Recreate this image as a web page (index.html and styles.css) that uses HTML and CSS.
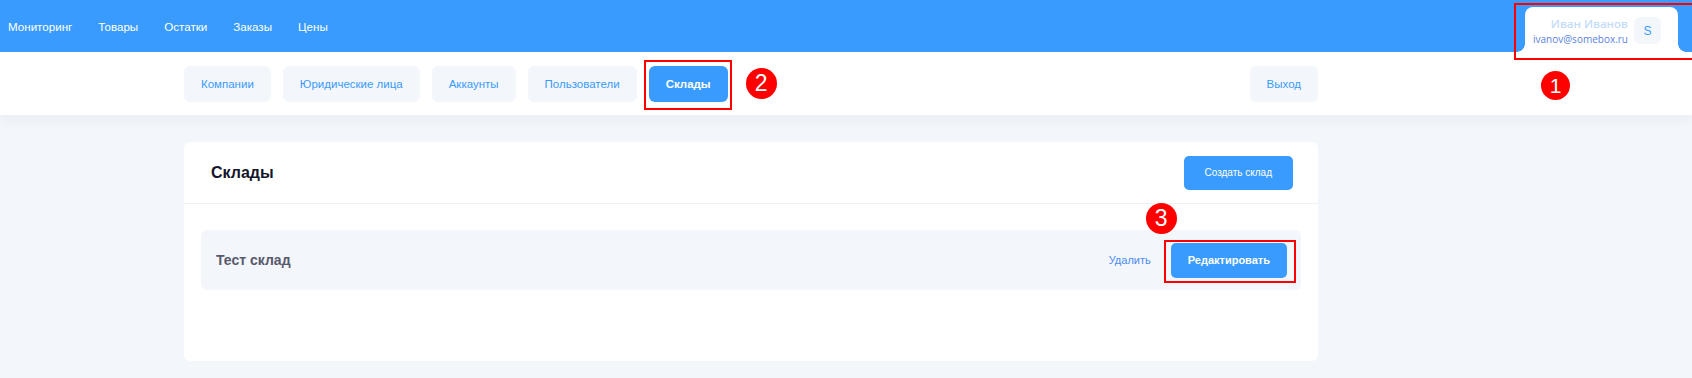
FILE: index.html
```html
<!DOCTYPE html>
<html lang="ru">
<head>
  <meta charset="UTF-8">
  <title>Склады</title>
  <link rel="stylesheet" href="styles.css">
</head>
<body>
  <div class="header">
    <ul class="menu">
      <li><a href="#">Мониторинг</a></li>
      <li><a href="#">Товары</a></li>
      <li><a href="#">Остатки</a></li>
      <li><a href="#">Заказы</a></li>
      <li><a href="#">Цены</a></li>
    </ul>
    <div class="user">
      <div class="user-info">
        <span class="user-name">Иван Иванов</span>
        <span class="user-mail">ivanov@somebox.ru</span>
      </div>
      <span class="avatar">S</span>
      <span class="mark mark-box mark-user"></span>
      <span class="mark mark-num mark-1">1</span>
    </div>
  </div>

  <div class="subheader">
    <div class="wrap tabs">
      <a class="tab" href="#">Компании</a>
      <a class="tab" href="#">Юридические лица</a>
      <a class="tab" href="#">Аккаунты</a>
      <a class="tab" href="#">Пользователи</a>
      <a class="tab active" href="#">Склады
        <span class="mark mark-box mark-tab"></span>
        <span class="mark mark-num mark-2">2</span>
      </a>
      <a class="tab logout" href="#">Выход</a>
    </div>
  </div>

  <div class="wrap">
    <div class="card">
      <div class="card-head">
        <h2>Склады</h2>
        <a class="btn" href="#">Создать склад</a>
      </div>
      <div class="card-body">
        <div class="row">
          <span class="row-name">Тест склад</span>
          <a class="link" href="#">Удалить</a>
          <a class="btn btn-edit" href="#">Редактировать
            <span class="mark mark-box mark-edit"></span>
            <span class="mark mark-num mark-3">3</span>
          </a>
        </div>
      </div>
    </div>
  </div>
</body>
</html>
```

FILE: styles.css
```css
*{
  margin: 0;
  padding: 0;
  box-sizing: border-box;
}
body{
  background: #f3f6fa;
  font-family: "Liberation Sans", Arial, sans-serif;
  overflow: hidden;
}
a{
  text-decoration: none;
}
ul{
  list-style: none;
}

/* header */
.header{
  position: relative;
  z-index: 2;
  height: 52px;
  background: #3a9bfe;
  display: flex;
  align-items: flex-end;
}
.menu{
  display: flex;
  gap: 26px;
  padding-left: 8px;
  height: 52px;
  align-items: center;
}
.menu a{
  color: #fff;
  font-size: 11.6px;
}
.user{
  position: relative;
  margin-left: auto;
  margin-right: 14px;
  width: 153px;
  height: 45px;
  background: #fff;
  border-radius: 8px 8px 0 0;
  display: flex;
  align-items: center;
  justify-content: flex-end;
  gap: 6px;
  padding: 2px 17px 0 0;
}
.user::before,
.user::after{
  content: "";
  position: absolute;
  bottom: 0;
  width: 8px;
  height: 8px;
}
.user::before{
  left: -8px;
  background: radial-gradient(circle at 0 0, transparent 7.5px, #fff 8px);
}
.user::after{
  right: -8px;
  background: radial-gradient(circle at 100% 0, transparent 7.5px, #fff 8px);
}
.user-info{
  display: flex;
  flex-direction: column;
  align-items: flex-end;
  gap: 1px;
  font-family: "Open Sans", sans-serif;
}
.user-name{
  color: #c4dcfb;
  font-size: 11.5px;
  font-weight: 600;
}
.user-mail{
  color: #5a7fe0;
  font-size: 10px;
}
.avatar{
  width: 27px;
  height: 27px;
  border-radius: 6px;
  background: #f3f6fa;
  color: #3a9bfe;
  font-size: 12px;
  display: flex;
  align-items: center;
  justify-content: center;
}

/* subheader */
.subheader{
  position: relative;
  z-index: 1;
  height: 63px;
  background: #fff;
  box-shadow: 0 4px 14px rgba(40, 50, 90, 0.05);
}
.wrap{
  width: 1134px;
  margin-left: 184px;
}
.tabs{
  display: flex;
  gap: 12px;
  padding-top: 14px;
}
.tab{
  position: relative;
  height: 36px;
  padding: 0 17px;
  border-radius: 6px;
  background: #f3f6fa;
  color: #3a9bfe;
  font-size: 11.5px;
  display: flex;
  align-items: center;
}
.tab.active{
  background: #3a9bfe;
  color: #fff;
  font-weight: bold;
}
.logout{
  margin-left: auto;
}

/* card */
.card{
  margin-top: 27px;
  background: #fff;
  border-radius: 6px;
  height: 219px;
}
.card-head{
  height: 62px;
  border-bottom: 1px solid #eef0f4;
  display: flex;
  align-items: center;
  justify-content: space-between;
  padding: 0 25px 0 27px;
}
.card-head h2{
  font-size: 16px;
  font-weight: 600;
  color: #14162b;
}
.btn{
  position: relative;
  height: 34px;
  padding: 0 21px;
  border-radius: 5px;
  background: #3a9bfe;
  color: #fff;
  font-size: 10px;
  display: flex;
  align-items: center;
}
.card-body{
  padding: 26px 17px;
}
.row{
  height: 60px;
  background: #f3f6fa;
  border-radius: 6px;
  display: flex;
  align-items: center;
  padding: 0 14px 0 15px;
}
.row-name{
  font-size: 14px;
  font-weight: 600;
  color: #585a6c;
  margin-right: auto;
}
.link{
  color: #4a8cf4;
  font-size: 11px;
  margin-right: 20px;
}
.btn-edit{
  height: 35px;
  padding: 0 17px;
  font-size: 11px;
  font-weight: 600;
}

/* annotations */
.mark{
  position: absolute;
}
.mark-box{
  border: 2px solid #f00;
}
.mark-user{
  left: -11px;
  top: -4px;
  width: 180px;
  height: 57px;
}
.mark-tab{
  left: -5px;
  top: -6px;
  right: -4px;
  bottom: -8px;
}
.mark-edit{
  left: -7px;
  top: -3px;
  right: -9px;
  bottom: -5px;
}
.mark-num{
  width: 31px;
  height: 31px;
  border-radius: 50%;
  background: #f00;
  color: #fff;
  font-family: "Liberation Sans", Arial, sans-serif;
  font-size: 23px;
  font-weight: normal;
  display: flex;
  align-items: center;
  justify-content: center;
}
.mark-1{
  left: 16px;
  top: 64px;
  width: 29px;
  height: 29px;
  font-size: 21px;
}
.mark-2{
  left: 97px;
  top: 2px;
}
.mark-3{
  left: -25px;
  top: -40px;
}
```
